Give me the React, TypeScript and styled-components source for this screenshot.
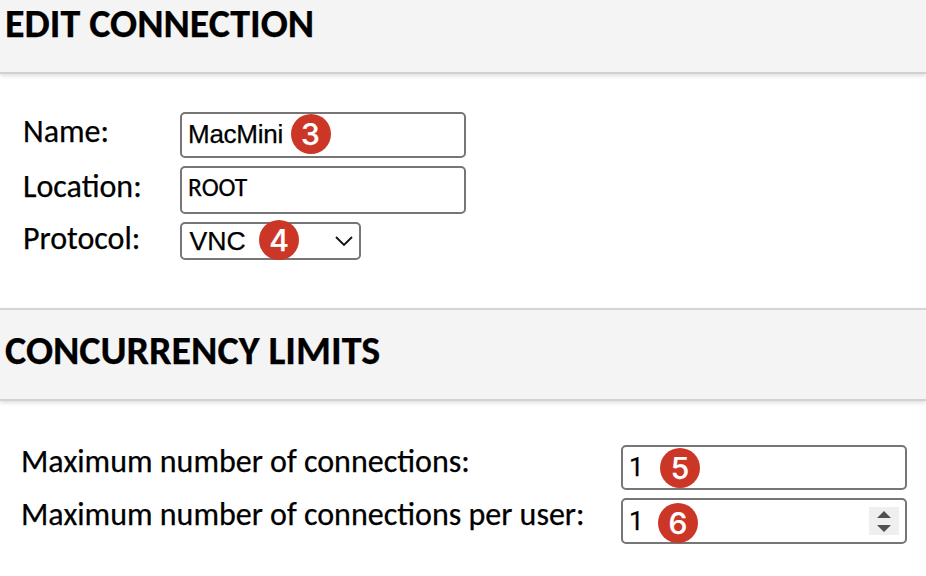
import React from "react";
import styled, { createGlobalStyle } from "styled-components";

const GlobalStyle = createGlobalStyle`
  * { box-sizing: border-box; }
  body { margin: 0; background: #fff; color: #000; overflow: hidden; }
`;

const Page = styled.main`
  width: 926px;
  height: 576px;
  overflow: hidden;
  font-family: Carlito, Lato, sans-serif;
  font-size: 32px;
  -webkit-text-stroke: 0.25px currentColor;
`;

const Header = styled.header<{ $first?: boolean }>`
  height: ${(p) => (p.$first ? 74 : 93)}px;
  padding: ${(p) => (p.$first ? 2 : 19)}px 0 0 5px;
  background: #f4f4f4;
  border-top: ${(p) => (p.$first ? "none" : "2px solid #d5d5d5")};
  border-bottom: 2px solid #d2d2d2;
  box-shadow: 0 2px 4px rgba(0, 0, 0, 0.13);
`;

const Title = styled.h1`
  margin: 0;
  font-size: 40px;
  line-height: 44px;
  font-weight: 700;
  white-space: nowrap;
`;

const Fields = styled.section<{ $labelWidth: number; $inset: number }>`
  display: grid;
  grid-template-columns: ${(p) => p.$labelWidth}px max-content;
  row-gap: 8px;
  padding-left: ${(p) => p.$inset}px;
`;

const ConnectionFields = styled(Fields)`
  height: 234px;
  padding-top: 38px;
  align-content: start;
`;

const LimitFields = styled(Fields)`
  padding-top: 44px;
`;

const Label = styled.label<{ $top?: number }>`
  padding-top: ${(p) => p.$top ?? 0}px;
  height: 38px;
  line-height: 34px;
  white-space: nowrap;
`;

const Field = styled.div<{ $height: number; $width?: number; $pad?: number }>`
  position: relative;
  display: flex;
  align-items: center;
  justify-content: space-between;
  width: ${(p) => p.$width ?? 286}px;
  height: ${(p) => p.$height}px;
  padding: 0 6px ${(p) => p.$pad ?? 0}px 6px;
  border: 2px solid #767676;
  border-radius: 5px;
  background: #fff;
`;

const Value = styled.span<{ $size?: number; $tracking?: number }>`
  font-family: "Liberation Sans", Arial, sans-serif;
  font-size: ${(p) => p.$size ?? 26}px;
  line-height: 30px;
  letter-spacing: ${(p) => p.$tracking ?? 0}px;
`;

const LocationValue = styled(Value)`
  font-family: Carlito, Lato, sans-serif;
`;

const ProtocolValue = styled(Value)`
  padding-left: 1.5px;
`;

const NumberValue = styled(Value)`
  font-family: Roboto, sans-serif;
`;

const Badge = styled.span<{ $left: number; $top: number }>`
  position: absolute;
  left: ${(p) => p.$left}px;
  top: ${(p) => p.$top}px;
  display: grid;
  place-items: center;
  width: 40px;
  height: 40px;
  border-radius: 50%;
  background: #cb3627;
  color: #fff;
  font: 500 30px/40px Inter, sans-serif;
`;

const Spinner = styled.span`
  display: grid;
  place-items: center;
  width: 30px;
  height: 28px;
  background: #efefef;
`;

export default function App() {
  return (
    <Page>
      <GlobalStyle />
      <Header $first>
        <Title>EDIT CONNECTION</Title>
      </Header>
      <ConnectionFields $labelWidth={157} $inset={23}>
        <Label $top={3}>Name:</Label>
        <Field $height={46} $pad={2}>
          <Value $tracking={-0.25}>MacMini</Value>
          <Badge $left={108.5} $top={-0.5}>3</Badge>
        </Field>
        <Label $top={4}>Location:</Label>
        <Field $height={48} $pad={4}>
          <LocationValue $size={25.6}>ROOT</LocationValue>
        </Field>
        <Label>Protocol:</Label>
        <Field $height={38} $width={181}>
          <ProtocolValue $size={26.67}>VNC</ProtocolValue>
          <Badge $left={77} $top={-4}>4</Badge>
          <svg width="18" height="12" viewBox="0 0 18 12" fill="none">
            <path d="M1 2 9 10 17 2" stroke="#111" strokeWidth="1.8" />
          </svg>
        </Field>
      </ConnectionFields>
      <Header>
        <Title>CONCURRENCY LIMITS</Title>
      </Header>
      <LimitFields $labelWidth={600} $inset={21}>
        <Label>Maximum number of connections:</Label>
        <Field $height={45} $pad={1}>
          <NumberValue>1</NumberValue>
          <Badge $left={37} $top={0.5}>5</Badge>
        </Field>
        <Label>Maximum number of connections per user:</Label>
        <Field $height={46}>
          <NumberValue>1</NumberValue>
          <Badge $left={35} $top={2.5}>6</Badge>
          <Spinner>
            <svg width="14" height="21" viewBox="0 0 14 21" fill="#505050">
              <path d="M0 7 7 0l7 7zM0 14h14l-7 7z" />
            </svg>
          </Spinner>
        </Field>
      </LimitFields>
    </Page>
  );
}
